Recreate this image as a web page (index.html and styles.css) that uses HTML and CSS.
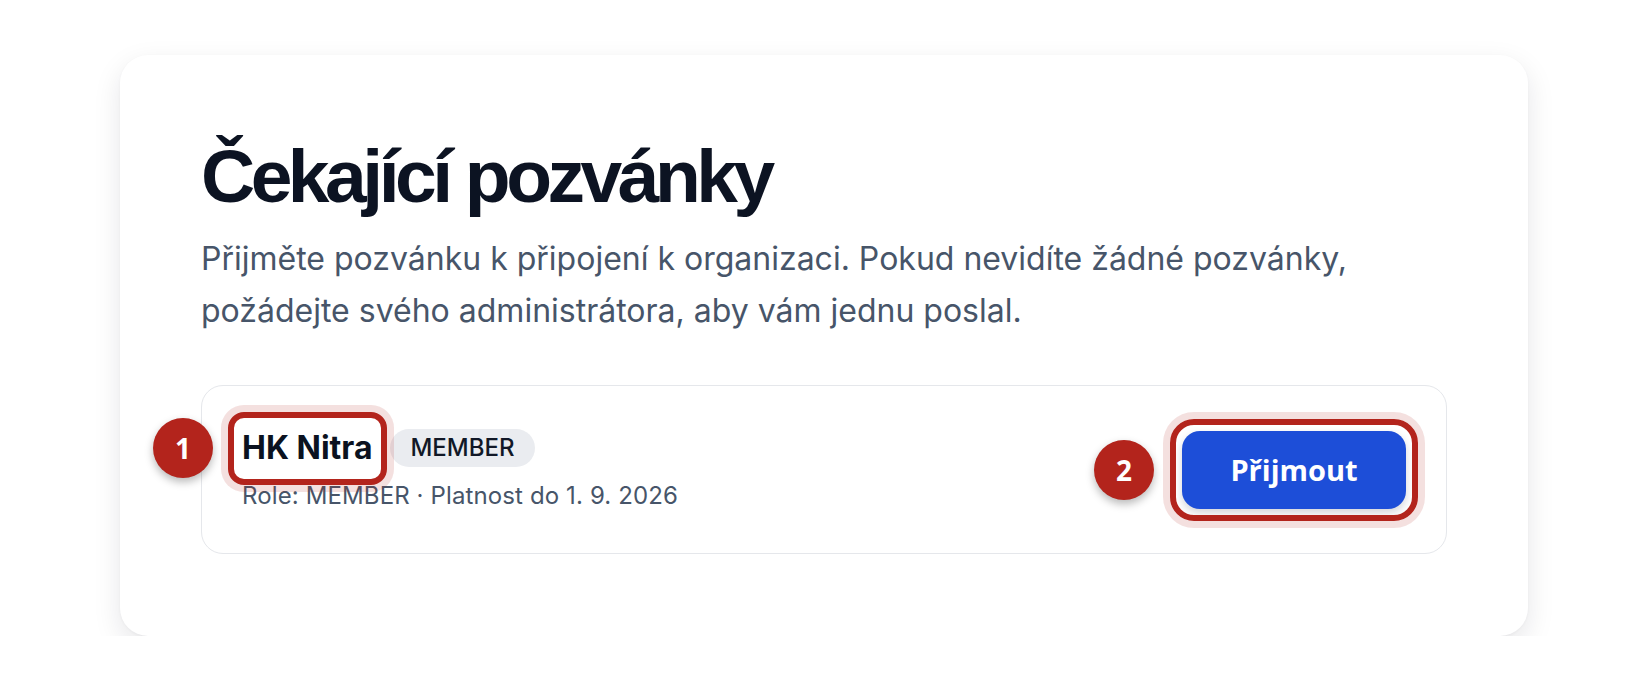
FILE: index.html
```html
<!DOCTYPE html>
<html lang="cs">
<head>
<meta charset="utf-8">
<title>Čekající pozvánky</title>
<link rel="stylesheet" href="styles.css">
</head>
<body>
<main class="page">
  <section class="card">
    <h1 class="title">Čekající pozvánky</h1>
    <p class="lead">Přijměte pozvánku k připojení k organizaci. Pokud nevidíte žádné pozvánky, požádejte svého administrátora, aby vám jednu poslal.</p>
    <div class="invite">
      <div class="info">
        <div class="name-row">
          <span class="name">HK Nitra<span class="hl hl-name"></span><span class="step step-1">1</span></span>
          <span class="badge">MEMBER</span>
        </div>
        <div class="meta">Role: MEMBER · Platnost do 1. 9. 2026</div>
      </div>
      <div class="action">
        <button class="accept" type="button">Přijmout</button>
        <span class="hl hl-btn"></span>
        <span class="step step-2">2</span>
      </div>
    </div>
  </section>
</main>
</body>
</html>
```
FILE: styles.css
```css
html, body {
  margin: 0;
  padding: 0;
  background: #ffffff;
}
body {
  font-family: Inter, "Noto Sans", "Liberation Sans", sans-serif;
  color: #0f172a;
}
.page {
  padding-top: 55px;
  display: flex;
  justify-content: center;
}
.card {
  width: 1408px;
  box-sizing: border-box;
  height: 581px;
  padding: 79px 81px 0 81px;
  background: #ffffff;
  border-radius: 28px;
  box-shadow: 0 10px 28px rgba(15, 23, 42, 0.10), 0 1px 3px rgba(15, 23, 42, 0.04);
}
.title {
  margin: 0;
  font-family: "Liberation Sans", Arial, sans-serif;
  font-weight: 700;
  font-size: 75px;
  line-height: 84px;
  letter-spacing: -0.06em;
  color: #0c1322;
}
.lead {
  margin: 15px 0 0 0;
  font-size: 32px;
  line-height: 52px;
  color: #475569;
  max-width: 1200px;
}
.invite {
  margin-top: 48px;
  height: 169px;
  box-sizing: border-box;
  border: 1px solid #e5e7eb;
  border-radius: 22px;
  padding: 0 40px;
  display: flex;
  align-items: center;
  justify-content: space-between;
}
.info {
  display: flex;
  flex-direction: column;
  gap: 13px;
}
.name-row {
  display: flex;
  align-items: center;
  gap: 18px;
  height: 40px;
}
.name {
  position: relative;
  font-weight: 700;
  font-size: 32px;
  line-height: 38px;
  color: #0b1220;
}
.badge {
  background: #eaecf0;
  color: #111827;
  font-weight: 500;
  font-size: 24px;
  line-height: 38px;
  padding: 0 20px;
  border-radius: 19px;
}
.meta {
  font-size: 24px;
  line-height: 30px;
  letter-spacing: 0.005em;
  color: #475569;
}
.action {
  position: relative;
}
.accept {
  display: block;
  width: 224px;
  height: 78px;
  border: none;
  border-radius: 18px;
  background: #1d4ed8;
  color: #ffffff;
  font-family: "Open Sans", sans-serif;
  font-weight: 700;
  font-size: 29px;
  box-shadow: 0 4px 8px rgba(15, 23, 42, 0.18);
}
.hl {
  position: absolute;
  border: 6px solid #b3241c;
  box-shadow: 0 0 0 7px rgba(179, 36, 28, 0.14);
  pointer-events: none;
}
.hl-name {
  top: -17px;
  bottom: -18px;
  left: -14px;
  right: -15px;
  border-radius: 16px;
}
.hl-btn {
  top: -12px;
  bottom: -12px;
  left: -12px;
  right: -12px;
  border-radius: 24px;
}
.step {
  position: absolute;
  width: 60px;
  height: 60px;
  border-radius: 50%;
  background: #b3241c;
  color: #ffffff;
  font-family: "Open Sans", sans-serif;
  font-weight: 700;
  font-size: 28px;
  line-height: 60px;
  text-align: center;
  box-shadow: 0 4px 8px rgba(0, 0, 0, 0.28);
}
.step-1 {
  left: -89px;
  top: -11px;
}
.step-2 {
  left: -88px;
  top: 9px;
}
```
